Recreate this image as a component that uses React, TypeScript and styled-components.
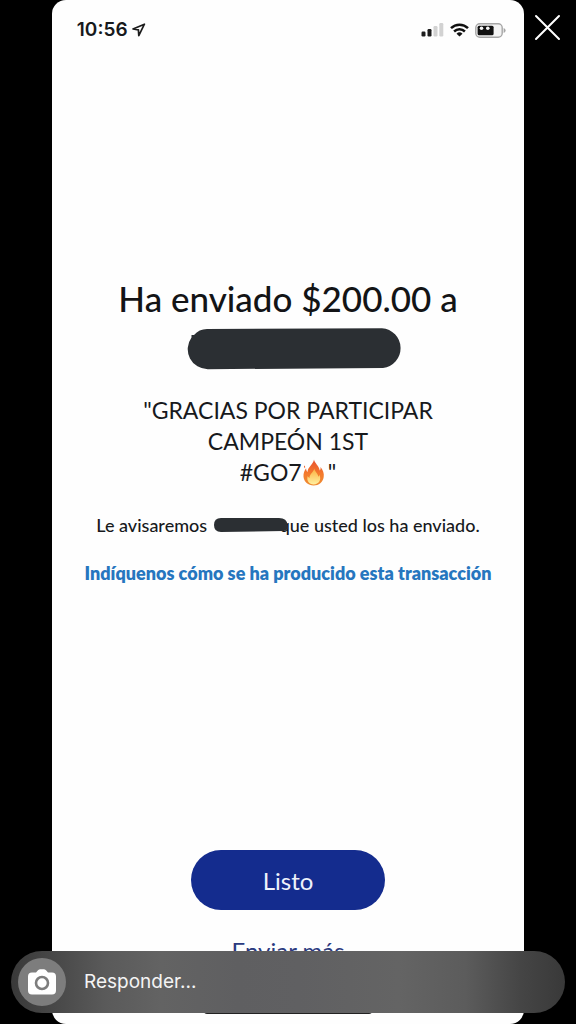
import React from "react";
import styled, { createGlobalStyle } from "styled-components";

const GlobalStyle = createGlobalStyle`
  *, *::before, *::after { box-sizing: border-box; }
  html, body { margin: 0; background: #000; }
  body { font-family: Lato, "Noto Sans", sans-serif; color: #17191c; }
  h1, p { margin: 0; font-weight: 400; }
  button, input { font: inherit; border: 0; padding: 0; margin: 0; }
`;

const Story = styled.div`
  position: relative;
  min-height: 100vh;
  padding: 0 9%;
  display: flex;
  background: #000;
`;

const Card = styled.main`
  flex: 1;
  min-width: 0;
  display: flex;
  flex-direction: column;
  background: #fefefe;
  border-radius: 14px;
  overflow: hidden;
`;

const StatusBar = styled.header`
  display: flex;
  align-items: center;
  justify-content: space-between;
  height: 60px;
  padding: 0 18px 0 25px;
`;

const Clock = styled.div`
  display: flex;
  align-items: center;
  gap: 4px;
  font: 600 19px/24px Inter, "Liberation Sans", sans-serif;
`;

const Indicators = styled.div`
  display: flex;
  align-items: center;
  gap: 6px;
`;

const Message = styled.section`
  flex: 1;
  display: flex;
  flex-direction: column;
  align-items: center;
  padding: 216px 16px 0;
  text-align: center;
`;

const Title = styled.h1`
  font-size: 35px;
  line-height: 44px;
  font-weight: 500;
  color: #131416;
  white-space: nowrap;
`;

const Redaction = styled.svg`
  display: block;
  margin-top: 8px;
`;

const Note = styled.p`
  margin-top: 25px;
  font-size: 23px;
  line-height: 31px;
  white-space: nowrap;
`;

const Flame = styled.svg`
  vertical-align: -5px;
`;

const Detail = styled.p`
  margin-top: 23px;
  font-size: 18px;
  line-height: 28px;
  font-weight: 500;
  white-space: nowrap;
`;

const InlineRedaction = styled.svg`
  position: relative;
  vertical-align: -1px;
  margin-right: -8px;
`;

const ReportLink = styled.a`
  margin-top: 20px;
  font-size: 18px;
  line-height: 28px;
  font-weight: 800;
  color: #2676bf;
  text-decoration: none;
  white-space: nowrap;
`;

const Actions = styled.footer`
  display: flex;
  flex-direction: column;
  align-items: center;
  padding-bottom: 10px;
`;

const DoneButton = styled.button`
  width: 194px;
  height: 60px;
  border-radius: 30px;
  background: #142c8e;
  color: #eef2fb;
  font-size: 24px;
`;

const MoreButton = styled.button`
  margin-top: 26px;
  background: none;
  color: #2b3a80;
  font-size: 24px;
  line-height: 30px;
`;

const HomeIndicator = styled.div`
  width: 168px;
  height: 6px;
  margin-top: 42px;
  border-radius: 3px;
  background: #222;
`;

const CloseButton = styled.button`
  position: absolute;
  top: 14px;
  right: 15px;
  width: 27px;
  height: 27px;
  background: none;
  svg { display: block; }
`;

const ReplyBar = styled.form`
  position: absolute;
  left: 11px;
  right: 11px;
  bottom: 11px;
  height: 62px;
  padding: 0 8px 0 7px;
  display: flex;
  align-items: center;
  gap: 18px;
  border-radius: 31px;
  background: linear-gradient(90deg, #393939 0, #484848 8%, #5a5a5a 17%, #636363 27%, #5f5f61 41%, #606062 52%, #646464 70%, #5c5c5c 82%, #454545 92%, #393939 100%);
`;

const CameraButton = styled.button`
  flex: none;
  width: 48px;
  height: 48px;
  border-radius: 50%;
  background: #7d7d7d;
  display: grid;
  place-items: center;
`;

const ReplyInput = styled.input`
  flex: 1;
  min-width: 0;
  background: none;
  outline: 0;
  color: #f4f4f4;
  font: 400 19px/28px Inter, "Liberation Sans", sans-serif;
  &::placeholder { color: #f4f4f4; opacity: 1; }
`;

export default function App() {
  return (
    <Story>
      <GlobalStyle />
      <Card>
        <StatusBar>
          <Clock>
            10:56
            <svg width="14" height="14" viewBox="0 0 14 14" fill="none" stroke="#1c1c1c" strokeWidth="1.7" strokeLinejoin="round" aria-hidden="true">
              <path d="M12.4 1.2 1 6l5.400.9.4 5.700z" />
            </svg>
          </Clock>
          <Indicators>
            <svg width="23" height="14" viewBox="0 0 23 14" aria-label="Señal">
              <rect x="0.5" y="8.5" width="4" height="5" rx="1.2" fill="#1c1c1c" />
              <rect x="6.5" y="6" width="4" height="7.5" rx="1.2" fill="#1c1c1c" />
              <rect x="12.5" y="3" width="4" height="10.5" rx="1.2" fill="#d2d2d2" />
              <rect x="18.3" y="0" width="4" height="13.5" rx="1.2" fill="#d2d2d2" />
            </svg>
            <svg width="19" height="14" viewBox="0 0 19 14" fill="none" stroke="#111" strokeWidth="2.5" aria-label="Wi-Fi">
              <path d="M1 5.2a12.2 12.2 0 0 1 17 0" />
              <path d="M4.1 8.5a7.8 7.8 0 0 1 10.8 0" />
              <path d="M9.5 13.6 6.5 10.7a4.4 4.4 0 0 1 6 0z" fill="#111" stroke="none" />
            </svg>
            <svg width="31" height="15" viewBox="0 0 31 15" aria-label="Batería">
              <rect x="0.8" y="0.8" width="26.4" height="13.4" rx="4" fill="#f4f4f4" stroke="#a6a6a6" strokeWidth="1.4" />
              <path d="M28.6 5v5q2-.8 2-2.5t-2-2.5z" fill="#a6a6a6" />
              <rect x="2.6" y="2.8" width="16" height="9.4" rx="1.5" fill="#111" />
              <circle cx="6.5" cy="5.2" r="1.8" fill="#f8f8f8" />
              <circle cx="12.8" cy="5.2" r="1.8" fill="#f8f8f8" />
            </svg>
          </Indicators>
        </StatusBar>

        <Message>
          <Title>Ha enviado $200.00 a</Title>
          <Redaction width="228" height="42" viewBox="-13 0 228 42" aria-hidden="true">
            <path d="M20 1 195 .2A20 20 0 0 1 196 40L21 41.200A20 20 0 0 1 4.500 9.500V7H7Q12 1.200 20 1Z" fill="#2b2f33" />
          </Redaction>
          <Note>
            "GRACIAS POR PARTICIPAR
            <br />
            CAMPEÓN 1ST
            <br />
            #GO7
            <Flame width="26" height="27" viewBox="1.500 0 26 27" role="img" aria-label="fuego">
              <defs>
                <linearGradient id="flameOuter" x1="0" y1="0" x2="0" y2="1">
                  <stop offset="0" stopColor="#e8502f" />
                  <stop offset="0.55" stopColor="#f47a2c" />
                  <stop offset="1" stopColor="#ee8c32" />
                </linearGradient>
                <linearGradient id="flameInner" x1="0" y1="0" x2="0" y2="1">
                  <stop offset="0" stopColor="#fbb040" />
                  <stop offset="1" stopColor="#fff0a0" />
                </linearGradient>
              </defs>
              <path d="M13.500.5c.3 3.500 5.500 6.500 5.700 11 .9-.8 1-2.200.8-3.500 2.400 3 3.800 6.300 3.200 10-.8 5.300-4.800 8.500-10 8.500-5.700 0-9.700-3.700-10.200-8.700-.3-3.600 1-6.500 2.600-8.600.1 1.700.5 2.900 1.400 3.700C7.300 8 12.800 5.500 13.500.5z" fill="url(#flameOuter)" />
              <path d="M3.800 6.500c1 .8 1.100 1.700.6 2.700-.9-.7-1.200-1.700-.6-2.700z" fill="#ee6a35" />
              <path d="M13.800 9.500c.2 3 3.800 5 4 8.200.7-.5 1-1.200 1-2.100 2.600 5.400-.6 9.900-5.600 9.900-4.600 0-7.400-3.600-6-8.500.5 1 1 1.500 1.800 1.900-.1-3.800 3.900-5.400 4.800-9.400z" fill="url(#flameInner)" />
            </Flame>
            "
          </Note>
          <Detail>
            Le avisaremos{" "}
            <InlineRedaction width="76" height="16" viewBox="-2 0 76 16" aria-hidden="true">
              <path d="M7 1h58q8 0 8.500 7v4q-1 2-4 2L7 15Q0 15 0 8t7-7z" fill="#2b2f33" />
            </InlineRedaction>
            que usted los ha enviado.
          </Detail>
          <ReportLink href="#transaccion">Indíquenos cómo se ha producido esta transacción</ReportLink>
        </Message>

        <Actions>
          <DoneButton type="button">Listo</DoneButton>
          <MoreButton type="button">Enviar más</MoreButton>
          <HomeIndicator />
        </Actions>
      </Card>

      <CloseButton type="button" aria-label="Cerrar">
        <svg width="27" height="27" viewBox="0 0 27 27" stroke="#fff" strokeWidth="2" strokeLinecap="round" aria-hidden="true">
          <path d="M2 2 25 25M25 2 2 25" />
        </svg>
      </CloseButton>

      <ReplyBar>
        <CameraButton type="button" aria-label="Cámara">
          <svg width="28" height="26" viewBox="0 0 28 26" aria-hidden="true">
            <path d="M4 3.500h4L10 1.300Q11 .3 12.200.3h3.600Q17 .3 18 1.300l2 2.200h4q4 0 4 4v14q0 4-4 4H4q-4 0-4-4v-14q0-4 4-4z" fill="#fff" />
            <circle cx="14" cy="14" r="6" fill="#fff" stroke="#7d7d7d" strokeWidth="2.600" />
          </svg>
        </CameraButton>
        <ReplyInput type="text" placeholder="Responder..." aria-label="Responder" />
      </ReplyBar>
    </Story>
  );
}
